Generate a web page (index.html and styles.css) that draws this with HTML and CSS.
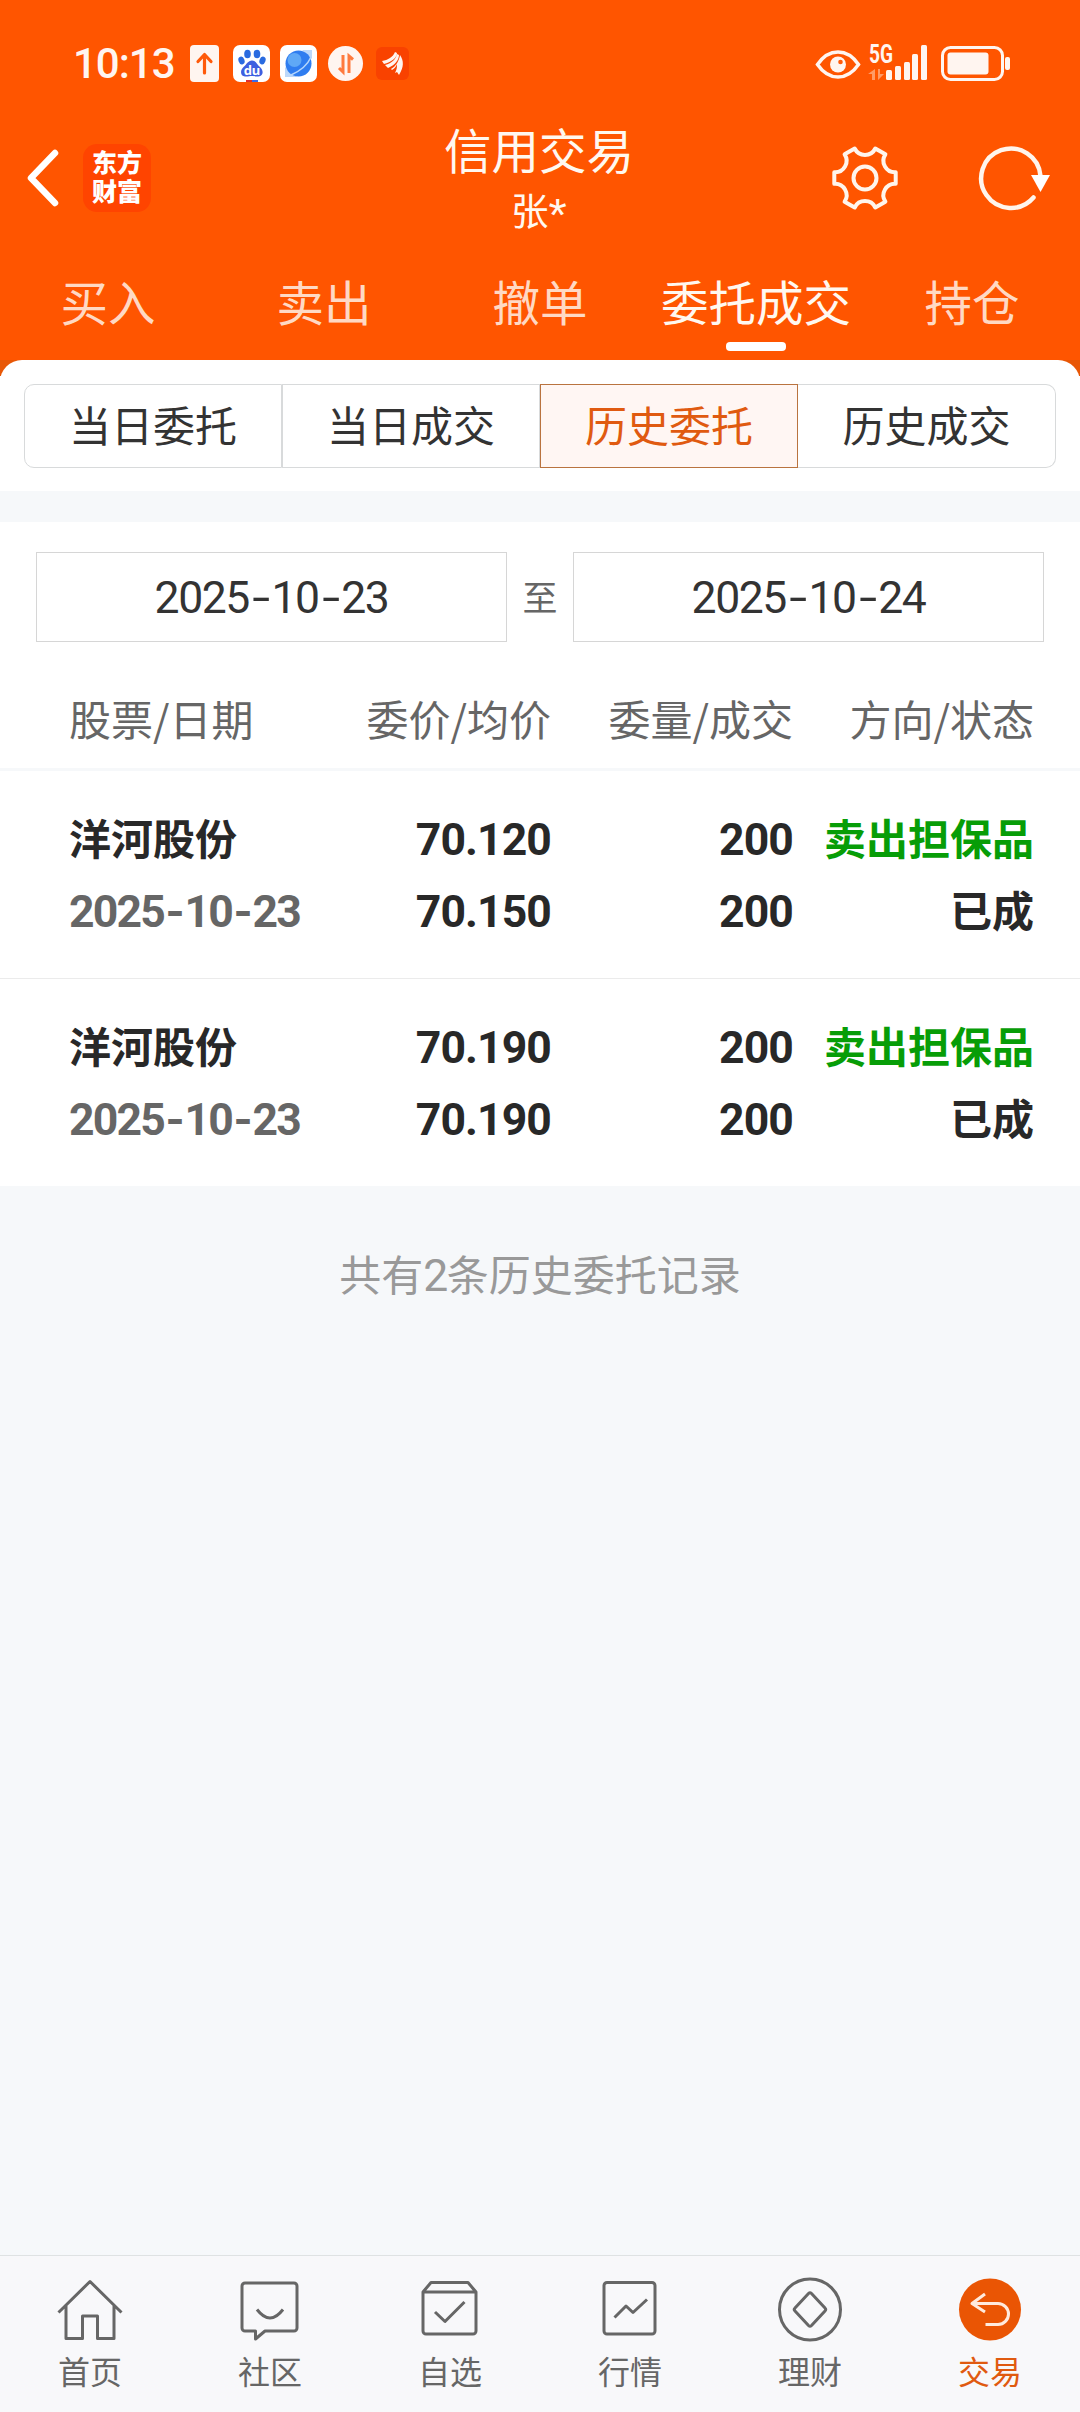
FILE: index.html
```html
<!DOCTYPE html>
<html lang="zh-CN">
<head>
	<meta charset="UTF-8">
	<meta name="viewport" content="width=device-width, initial-scale=1.0">
	<title>信用交易</title>

	<link rel="stylesheet" href="styles.css">
</head>
<body>
	<header class="header">
		<div class="status-bar">
			<div class="time">10:13</div>
			<svg class="status-left" width="220" height="38" viewBox="0 0 220 38">
				<!-- upload -->
				<rect x="0" y="0" width="29" height="37" rx="4" fill="#fff5f0"/>
				<path d="M14.500 28V10M8 16.500l6.500-7 6.500 7" fill="none" stroke="#ff5a0a" stroke-width="3.200" stroke-linecap="round" stroke-linejoin="round"/>
				<!-- baidu -->
				<rect x="43" y="0" width="37" height="37" rx="7" fill="#fff"/>
				<g fill="#2a6be0">
					<ellipse cx="57.500" cy="9" rx="3.300" ry="4.300"/>
					<ellipse cx="67" cy="9" rx="3.300" ry="4.300"/>
					<ellipse cx="51.500" cy="15.500" rx="3" ry="4" transform="rotate(-20 51.500 15.500)"/>
					<ellipse cx="72.500" cy="15.500" rx="3" ry="4" transform="rotate(20 72.500 15.500)"/>
				</g>
				<path d="M62 15.500c4 0 5 4 8 6.500 3.500 3 4 9-1.500 9.500-3 .3-4-.5-6.500-.5s-4 .8-7 .5C50 31 50 25 53.500 22c3-2.500 4.500-6.500 8.500-6.500z" fill="#3e5fe0"/>
				<text class="du" x="62" y="29.500">du</text>
				<path d="M56 35h6v2h-6z" fill="#e03030"/>
				<path d="M62 35h6v2h-6z" fill="#3c6be8"/>
				<!-- browser -->
				<rect x="90" y="0" width="37" height="37" rx="7" fill="#fff"/>
				<path d="M112 5h10v9zM95 22v10h12z" fill="#bcd8fa"/>
				<circle cx="108.500" cy="18.500" r="13" fill="#2f7df0"/>
				<circle cx="104.500" cy="15" r="7" fill="#5fa8f6"/>
				<path d="M121 12c-3 7-11 14-20 18" fill="none" stroke="#b5d6fb" stroke-width="1.500"/>
				<!-- transfer -->
				<circle cx="155.500" cy="18.500" r="17.500" fill="#fff5f0"/>
				<path d="M153 10v17l-4-4M159 28V11l4 3.500" fill="none" stroke="#ff7a3d" stroke-width="3"/>
				<!-- wing -->
				<rect x="186" y="2" width="33" height="33" rx="6" fill="#f94200"/>
				<path d="M192 16c6-1 11-4 13-9l2 1c0 5-6 9-13 11zM195 20c7-2 11-6 12-11l2 1c0 5-4 10-11 13zM201 24c5-3 8-8 9-14 4 6 4 12-1 20l-2-3-2 1c2-4 2-6 2-9-1 3-3 5-5 6z" fill="#fff5f0"/>
			</svg>
			<svg class="status-right" width="196" height="38" viewBox="0 0 196 38">
				<!-- eye -->
				<path d="M2.500 19.500Q11 7 23 7t20.500 12.500Q35 32 23 32T2.500 19.500z" fill="none" stroke="#fff5f0" stroke-width="3.500"/>
				<circle cx="23" cy="19.500" r="8" fill="#fff5f0"/>
				<circle cx="25.500" cy="17" r="2.300" fill="#ff5a0a"/>
				<!-- signal -->
				<text class="net" x="54" y="17.500" textLength="24" lengthAdjust="spacingAndGlyphs">5G</text>
				<path d="M60 24v11h-3v-6h-4zM63 35V24h2v5h4z" fill="#ff9a66"/>
				<g fill="#fff5f0">
					<rect x="71" y="25" width="6" height="10" rx="1.500"/>
					<rect x="80" y="21" width="6" height="14" rx="1.500"/>
					<rect x="89" y="17" width="6" height="18" rx="1.500"/>
					<rect x="97" y="9" width="6" height="26" rx="1.500"/>
					<rect x="106" y="0" width="6" height="35" rx="1.500"/>
				</g>
				<!-- battery -->
				<rect x="127.500" y="2.500" width="60" height="32" rx="8" fill="none" stroke="#fff5f0" stroke-width="3"/>
				<rect x="132.500" y="7.500" width="41" height="22" rx="3" fill="#fff5f0"/>
				<rect x="190" y="12" width="5" height="13" rx="2" fill="#fff5f0"/>
			</svg>
		</div>

		<div class="nav-bar">
			<div class="nav-left">
				<svg width="34" height="60" viewBox="0 0 34 60">
					<path d="M28 5L4 30l24 25" fill="none" stroke="#fff" stroke-width="6.500" stroke-linecap="round" stroke-linejoin="round"/>
				</svg>
				<div class="logo">东方<br>财富</div>
			</div>
			<div class="nav-title">
				<div class="title">信用交易</div>
				<div class="user">张<span class="mask">*</span></div>
			</div>
			<div class="nav-right">
				<svg width="68" height="68" viewBox="-34 -34 68 68" fill="none" stroke="#fff5ec" stroke-width="4">
					<path d="M30.700-5.800L30.700 5.800A11.500 11.500 0 0 0 20.400 23.700L10.300 29.500A11.500 11.500 0 0 0-10.300 29.500L-20.400 23.700A11.500 11.500 0 0 0-30.700 5.800L-30.700-5.800A11.500 11.500 0 0 0-20.400-23.700L-10.300-29.500A11.500 11.500 0 0 0 10.300-29.500L20.400-23.700A11.500 11.500 0 0 0 30.700-5.800Z" stroke-linejoin="round"/>
					<circle r="11.500"/>
				</svg>
				<svg width="74" height="68" viewBox="-34 -34 74 68">
					<path d="M29.500-2A29.700 29.700 0 1 0 22.500 19.500" fill="none" stroke="#fff5ec" stroke-width="4.500" stroke-linecap="round"/>
					<path d="M20-3H39L29.500 14z" fill="#fff"/>
				</svg>
			</div>
		</div>

		<div class="tabs">
			<div class="tab">买入</div>
			<div class="tab">卖出</div>
			<div class="tab">撤单</div>
			<div class="tab active">委托成交</div>
			<div class="tab">持仓</div>
		</div>
	</header>

	<div class="panel-wrap">
		<div class="panel">
			<div class="segments">
				<div class="segment">当日委托</div>
				<div class="segment">当日成交</div>
				<div class="segment active">历史委托</div>
				<div class="segment">历史成交</div>
			</div>
		</div>
	</div>

	<div class="dates">
		<div class="date-box num">2025<i>-</i>10<i>-</i>23</div>
		<div class="to">至</div>
		<div class="date-box num">2025<i>-</i>10<i>-</i>24</div>
	</div>

	<div class="list">
		<div class="row head">
			<div>股票/日期</div>
			<div>委价/均价</div>
			<div>委量/成交</div>
			<div>方向/状态</div>
		</div>
		<div class="row item">
			<div>洋河股份</div>
			<div class="num">70.120</div>
			<div class="num">200</div>
			<div class="sell">卖出担保品</div>
			<div class="num day">2025<i>-</i>10<i>-</i>23</div>
			<div class="num">70.150</div>
			<div class="num">200</div>
			<div>已成</div>
		</div>
		<div class="row item">
			<div>洋河股份</div>
			<div class="num">70.190</div>
			<div class="num">200</div>
			<div class="sell">卖出担保品</div>
			<div class="num day">2025<i>-</i>10<i>-</i>23</div>
			<div class="num">70.190</div>
			<div class="num">200</div>
			<div>已成</div>
		</div>
	</div>

	<div class="total">共有<span class="num">2</span>条历史委托记录</div>

	<nav class="bottom-nav">
		<div class="nav-item">
			<svg width="70" height="70" viewBox="0 0 70 70">
				<path d="M3.500 37.500L35 6.500l31.500 31M11 31v32.500h16.500V41h15v22.500H59V31"/>
			</svg>
			首页
		</div>
		<div class="nav-item">
			<svg width="70" height="70" viewBox="0 0 70 70">
				<path d="M10 8h49a3 3 0 0 1 3 3v42a3 3 0 0 1-3 3H30l-9.500 8V56H10a3 3 0 0 1-3-3V11a3 3 0 0 1 3-3zM22 34.500q13 17 26 0"/>
			</svg>
			社区
		</div>
		<div class="nav-item">
			<svg width="70" height="70" viewBox="0 0 70 70">
				<path d="M8 17l8-9.500h37l8 9.500v39a3 3 0 0 1-3 3H11a3 3 0 0 1-3-3zM8 17h53M20 37l10 9.500L49.500 27"/>
			</svg>
			自选
		</div>
		<div class="nav-item">
			<svg width="70" height="70" viewBox="0 0 70 70">
				<path d="M12 7.500h45a3 3 0 0 1 3 3V56a3 3 0 0 1-3 3H12a3 3 0 0 1-3-3V10.500a3 3 0 0 1 3-3zM19.500 42.500L31 31l7 6.500 14-13"/>
			</svg>
			行情
		</div>
		<div class="nav-item">
			<svg width="70" height="70" viewBox="0 0 70 70">
				<circle cx="35" cy="34.500" r="30.500"/>
				<path d="M33.500 18.500q1.500-1.500 3 0l13.500 14.500q1.500 1.500 0 3l-13.500 14.500q-1.500 1.500-3 0L20 36q-1.500-1.500 0-3z"/>
			</svg>
			理财
		</div>
		<div class="nav-item active">
			<svg width="70" height="70" viewBox="0 0 70 70">
				<circle class="disc" cx="35" cy="34.500" r="31"/>
				<path class="arrow" d="M30 19L17 28.500 30 37M17 28.500h26a10.500 10.500 0 0 1 0 21H30.500"/>
			</svg>
			交易
		</div>
	</nav>
</body>
</html>
```

FILE: styles.css
```css
* {
	box-sizing: border-box;
}

body {
	margin: 0;
	min-height: 2412px;
	display: flex;
	flex-direction: column;
	background: #f6f8fa;
	color: #333;
	font-family: "Noto Sans CJK SC", "Noto Sans", sans-serif;
	font-size: 42px;
}

svg {
	display: block;
	flex: none;
	overflow: visible;
}

/* digits */
.num {
	font-family: Roboto, "Noto Sans CJK SC", sans-serif;
	font-size: 44.5px;
	letter-spacing: -1.4px;
}

.num i {
	display: inline-block;
	width: 22.5px;
	font-style: normal;
	text-align: center;
	transform: scaleX(1.45);
}

/* header */
.header {
	height: 360px;
	background: #ff5500;
	color: #fff8f0;
}

.status-bar {
	height: 120px;
	padding: 45px 69px 0 73px;
	display: flex;
	align-items: flex-start;
}

.time {
	width: 117px;
	font-family: Roboto, sans-serif;
	font-size: 42px;
	font-weight: 500;
	line-height: 38px;
	letter-spacing: -1px;
	color: #fff5f0;
}

.status-right {
	margin-left: auto;
}

.du {
	font: bold 13px "Noto Sans", sans-serif;
	fill: #fff;
	text-anchor: middle;
}

.net {
	font: bold 25px Roboto, sans-serif;
	fill: #fff5f0;
}

.nav-bar {
	height: 130px;
	padding: 0 29px 0 27px;
	display: grid;
	grid-template-columns: 1fr auto 1fr;
}

.nav-left {
	height: 116px;
	display: flex;
	align-items: center;
	gap: 22px;
}

.logo {
	width: 68px;
	height: 68px;
	padding-top: 3px;
	border-radius: 14px;
	background: #ff4400;
	color: #fff;
	font-family: "Noto Sans CJK SC", sans-serif;
	font-size: 25px;
	font-weight: 900;
	line-height: 29px;
	text-align: center;
}

.nav-title {
	text-align: center;
}

.title {
	margin-top: -1px;
	font-size: 47.5px;
	line-height: 60px;
}

.user {
	font-size: 37.5px;
	line-height: 60px;
}

.mask {
	font-family: "Liberation Sans", sans-serif;
	font-size: 47px;
	line-height: 1;
	vertical-align: -6px;
}

.nav-right {
	height: 116px;
	display: flex;
	align-items: center;
	justify-content: flex-end;
	gap: 78px;
}

.tabs {
	height: 110px;
	display: grid;
	grid-template-columns: repeat(5, 1fr);
}

.tab {
	display: flex;
	flex-direction: column;
	align-items: center;
	font-size: 47.5px;
	line-height: 101px;
	white-space: nowrap;
	color: #ffd9c4;
}

.tab.active {
	color: #fff8f0;
}

.tab.active::after {
	content: "";
	width: 60px;
	height: 9px;
	margin-top: -9px;
	border-radius: 4px;
	background: #fff;
}

/* order type switch */
.panel-wrap {
	background: linear-gradient(#e85706 16px, #fff 16px);
}

.panel {
	height: 131px;
	padding: 24px;
	border-radius: 22px 22px 0 0;
	background: #fff;
}

.segments {
	height: 84px;
	display: grid;
	grid-template-columns: repeat(4, 1fr);
}

.segment {
	border: 1px solid #d8dadb;
	line-height: 77px;
	text-align: center;
}

.segment:first-child {
	border-radius: 10px 0 0 10px;
}

.segment:last-child {
	border-left: none;
	border-radius: 0 10px 10px 0;
}

.segment.active {
	border-color: #b9733f;
	background: #fff6f3;
	color: #e05a10;
}

/* date range */
.dates {
	height: 151px;
	margin-top: 31px;
	padding: 30px 36px;
	display: flex;
	background: #fff;
}

.date-box {
	width: 471px;
	height: 90px;
	border: 1px solid #d6d6d6;
	line-height: 90px;
	text-align: center;
}

.to {
	flex: 1;
	font-size: 35px;
	line-height: 88px;
	text-align: center;
	color: #666;
}

/* orders */
.list {
	background: #fff;
}

.row {
	padding: 0 46px 0 69px;
	display: grid;
	grid-template-columns: 240px 242px 242px 1fr;
	text-align: right;
	white-space: nowrap;
}

.row > :nth-child(4n + 1) {
	text-align: left;
}

.row > :nth-child(4n) {
	margin-left: -30px;
}

.head {
	height: 98px;
	border-bottom: 3px solid #f6f8fa;
	line-height: 89px;
	color: #666;
}

.item {
	height: 208px;
	padding-top: 30px;
	grid-auto-rows: 72px;
	border-bottom: 1px solid #ebebeb;
	font-weight: 700;
	line-height: 72px;
	color: #282828;
}

.item:last-child {
	height: 207px;
	border-bottom: none;
}

.item .num {
	line-height: 78px;
	letter-spacing: -0.9px;
}

.item .day {
	letter-spacing: -1.8px;
	color: #666;
}

.item .day i {
	width: 20.5px;
	transform: scaleX(1.1);
}

.item .sell {
	color: #079d07;
}

.total {
	margin-top: 57px;
	line-height: 60px;
	text-align: center;
	color: #999;
}

/* bottom navigation */
.bottom-nav {
	height: 157px;
	margin-top: auto;
	padding-top: 19px;
	display: grid;
	grid-template-columns: repeat(6, 1fr);
	border-top: 1px solid #dfe2e3;
	background: #f8f8fa;
}

.nav-item {
	display: flex;
	flex-direction: column;
	align-items: center;
	font-size: 32px;
	line-height: 50px;
	color: #666;
}

.nav-item svg {
	fill: none;
	stroke: #666;
	stroke-width: 3;
	stroke-linejoin: round;
}

.nav-item.active {
	color: #e05a10;
}

.nav-item .disc {
	fill: #ea5504;
	stroke: none;
}

.nav-item .arrow {
	stroke: #ffeadd;
}
```
